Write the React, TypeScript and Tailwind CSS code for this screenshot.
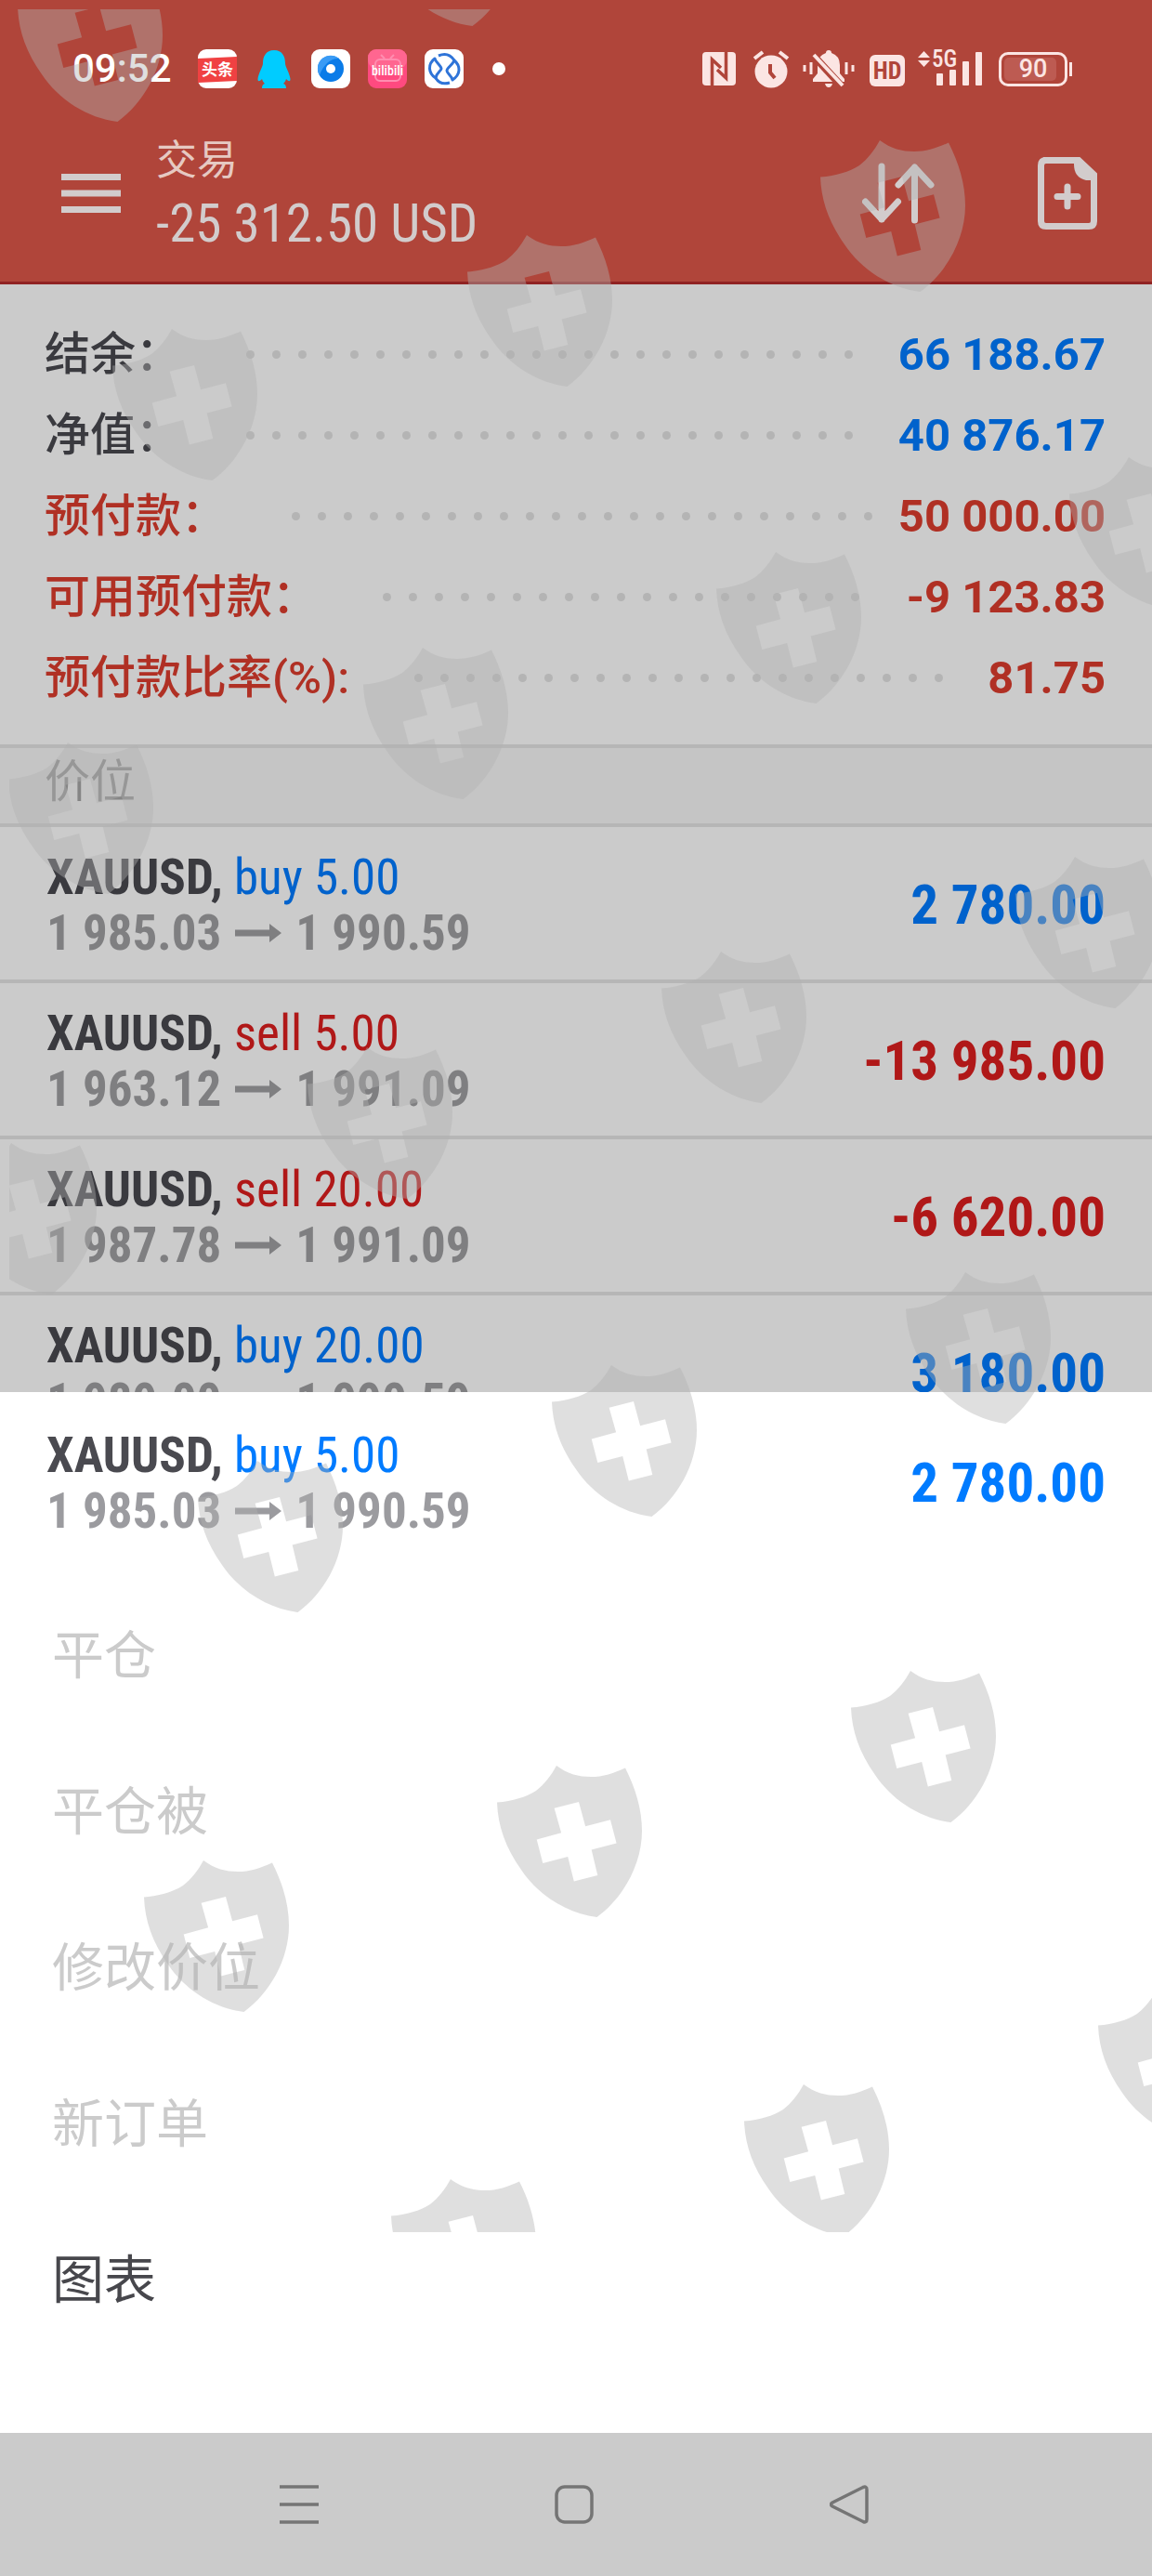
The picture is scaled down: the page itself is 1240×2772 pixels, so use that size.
import type { ReactNode } from "react";

type Side = "buy" | "sell";

type Position = {
  id: number;
  symbol: string;
  side: Side;
  volume: string;
  open: string;
  current: string;
  profit: string;
};

const positions: Position[] = [
  { id: 1, symbol: "XAUUSD", side: "buy", volume: "5.00", open: "1 985.03", current: "1 990.59", profit: "2 780.00" },
  { id: 2, symbol: "XAUUSD", side: "sell", volume: "5.00", open: "1 963.12", current: "1 991.09", profit: "-13 985.00" },
  { id: 3, symbol: "XAUUSD", side: "sell", volume: "20.00", open: "1 987.78", current: "1 991.09", profit: "-6 620.00" },
  { id: 4, symbol: "XAUUSD", side: "buy", volume: "20.00", open: "1 989.00", current: "1 990.59", profit: "3 180.00" },
];

const summary = [
  { label: "结余：", value: "66 188.67", labelColor: "text-[#3a3a3f]", valueColor: "text-[#0062cc]" },
  { label: "净值：", value: "40 876.17", labelColor: "text-[#3a3a3f]", valueColor: "text-[#0062cc]" },
  { label: "预付款：", value: "50 000.00", labelColor: "text-[#b03024]", valueColor: "text-[#b03024]" },
  { label: "可用预付款：", value: "-9 123.83", labelColor: "text-[#b03024]", valueColor: "text-[#b03024]" },
  { label: "预付款比率(%):", value: "81.75", labelColor: "text-[#b03024]", valueColor: "text-[#b03024]" },
];

const actions = [
  { label: "平仓", enabled: false },
  { label: "平仓被", enabled: false },
  { label: "修改价位", enabled: false },
  { label: "新订单", enabled: false },
  { label: "图表", enabled: true },
];

const shields = [
  [9, -42], [391, -145], [873, 141], [493, 243], [111, 344], [1141, 482],
  [761, 584], [381, 687], [-1, 789], [1083, 912], [702, 1014], [321, 1117],
  [-62, 1220], [965, 1359], [584, 1459], [203, 1562], [906, 1788], [525, 1890],
  [145, 1992], [1172, 2130], [791, 2233], [411, 2335],
];

function Shields() {
  return (
    <svg
      aria-hidden="true"
      className="pointer-events-none absolute top-[10px] right-0 left-[10px] h-[2392px] w-[calc(100%-10px)] fill-[#b2b2b2] opacity-[0.41]"
    >
      {shields.map(([x, y]) => (
        <path
          key={`${x}-${y}`}
          transform={`translate(${x} ${y})`}
          fillRule="evenodd"
          d="M64 0C76 9 88 12 101 12C114 12 126 8 138 2.4C149 24 156 47 156 70C156 107 135 143 107.500 163C75 159 44 139 26 112C9 88 1 65 0 39.600C17 38 31 34 42 27C51 20 58 11 64 0Z
            M61.600 45.700L69.100 72.200L42.700 79.600L49.300 104.900L76.200 97.900L82.800 124.400L108.300 117.900L101.700 90.600L128.600 83.600L122 58.300L95.100 65.300L88 39.100Z"
        />
      ))}
    </svg>
  );
}

function AppIcons() {
  return (
    <div className="flex items-center gap-[19px]">
      <svg width="42" height="42" viewBox="0 0 42 42" role="img" aria-label="头条">
        <rect width="42" height="42" rx="9" fill="#fff" />
        <path d="M0 10L42 8V34L0 36Z" fill="#f04142" />
        <text x="21" y="28" textAnchor="middle" fontSize="17" fontWeight="700" fill="#fff" className="font-['Noto_Sans_CJK_SC',sans-serif]">
          头条
        </text>
      </svg>
      <svg width="42" height="42" viewBox="0 0 42 42" role="img" aria-label="QQ">
        <path
          d="M21 1C12 1 9 8 9 15C9 19 4 26 3.500 32C3.500 35 5 35 8 32C9 35 10 36 11 37C8 38 8 41 8 42H34C34 41 34 38 31 37C32 36 33 35 34 32C37 35 38.500 35 38.500 32C38 26 33 19 33 15C33 8 30 1 21 1Z"
          fill="#0cf"
        />
      </svg>
      <svg width="42" height="42" viewBox="0 0 42 42" aria-hidden="true">
        <rect width="42" height="42" rx="9" fill="#fff" />
        <circle cx="21" cy="21" r="14" fill="#0a7be8" />
        <path d="M9 28A14 14 0 0 1 30 10C22 9 13 16 9 28Z" fill="#3a9bf5" />
        <circle cx="21" cy="21" r="5" fill="#fff" />
      </svg>
      <svg width="42" height="42" viewBox="0 0 42 42" role="img" aria-label="bilibili">
        <rect width="42" height="42" rx="9" fill="#ff4a80" />
        <rect width="42" height="21" rx="9" fill="#ff6690" />
        <rect x="8" y="11" width="27" height="23" rx="5" fill="none" stroke="#ff8db0" strokeWidth="2" />
        <path d="M14 6L18 10M28 6L24 10" stroke="#ff8db0" strokeWidth="2" />
        <text x="21" y="28" textAnchor="middle" fontSize="14" fontWeight="500" fill="#fff" className="font-[Roboto_Condensed,Roboto,sans-serif]">
          bilibili
        </text>
      </svg>
      <svg width="42" height="42" viewBox="0 0 42 42" aria-hidden="true">
        <rect width="42" height="42" rx="9" fill="#fff" />
        <g fill="none" stroke="#2f74d8" strokeWidth="3" strokeLinejoin="round">
          <path d="M12 31C4 26 3 16 11 10C12 14 18 18 18 21C18 23 13 25 12 31Z" />
          <path d="M30 33C39 27 39 18 32 12C30 17 24 20 24 23C24 26 29 28 30 33Z" />
          <path d="M15 7C22 4 28 6 32 12M27 36C20 38 15 36 12 31" />
        </g>
      </svg>
      <span className="ml-[12px] size-[14px] rounded-full bg-white" />
    </div>
  );
}

function SystemIcons() {
  return (
    <div className="flex items-center text-[#fbe5e3]">
      <svg width="36" height="36" viewBox="0 0 36 36" aria-label="NFC" role="img">
        <rect width="36" height="36" rx="4" fill="currentColor" />
        <path d="M10.500 36V8L20 17M25.500 0V28L16 19" fill="none" stroke="#b0453a" strokeWidth="3.500" />
      </svg>
      <svg className="ml-[18px]" width="40" height="42" viewBox="0 0 40 42" aria-label="闹钟" role="img">
        <circle cx="20" cy="24" r="17.500" fill="currentColor" />
        <path d="M2 10L11 3M38 10L29 3" stroke="currentColor" strokeWidth="4" />
        <path d="M19 16V25L24 31" fill="none" stroke="#b0453a" strokeWidth="4" />
      </svg>
      <svg className="ml-[14px]" width="56" height="42" viewBox="0 0 56 42" aria-label="静音" role="img">
        <path d="M28 1Q31 1 31 4Q40 7 40 17V26L45 32V35H11V32L16 26V17Q16 7 25 4Q25 1 28 1ZM24 37H32Q31 41 28 41Q25 41 24 37Z" fill="currentColor" />
        <path d="M9 4L43 41" stroke="#b0453a" strokeWidth="8" />
        <path d="M12 6L43 39" stroke="currentColor" strokeWidth="4" />
        <path d="M2 17V24M9 14V27M47 14V27M54 17V24" stroke="currentColor" strokeWidth="3" />
      </svg>
      <span className="mt-[4px] ml-[16px] flex h-[34px] w-[38px] items-center justify-center rounded-[6px] bg-[#fbe5e3]">
        <span className="font-[Roboto_Condensed,Roboto,sans-serif] text-[26px] leading-[26px] font-bold text-[#b0453a]">HD</span>
      </span>
      <svg className="ml-[14px] overflow-visible" width="70" height="42" viewBox="0 0 70 42" fill="currentColor" aria-label="5G" role="img">
        <path d="M0 9L6.500 2L13 9ZM0 12L6.500 19L13 12Z" />
        <text x="15" y="19" fontSize="25" fontWeight="500" className="font-[Roboto_Condensed,Roboto,sans-serif]">
          5G
        </text>
        <rect x="20" y="26" width="7" height="13" rx="1" />
        <rect x="34" y="22" width="7" height="17" rx="1" />
        <rect x="48" y="13" width="7" height="26" rx="1" />
        <rect x="62" y="3" width="7" height="36" rx="1" />
      </svg>
      <span className="ml-[17px] flex h-[37px] w-[74px] rounded-[10px] border-[3px] border-current py-[3px] pr-[9px] pl-[3px]">
        <span className="flex flex-1 items-center justify-center rounded-[5px] bg-[#bd5b52] pl-[6px] font-[Roboto,sans-serif] text-[27px] leading-[26px] font-medium">
          90
        </span>
      </span>
      <span className="ml-[2px] h-[15px] w-[3px] bg-current" />
    </div>
  );
}

function MenuIcon() {
  return (
    <svg width="64" height="42" viewBox="0 0 64 42" fill="currentColor" aria-hidden="true">
      <path d="M0 0H64V7H0ZM0 17.500H64V24.500H0ZM0 35H64V42H0Z" />
    </svg>
  );
}

function SortIcon() {
  return (
    <svg width="78" height="66" viewBox="0 0 78 66" fill="none" stroke="currentColor" strokeWidth="7" strokeLinecap="round" strokeLinejoin="round" aria-hidden="true">
      <path d="M21 4V61M3.500 42L21 61L38.500 42" />
      <path d="M56.500 62V5M39 24L56.500 5L74 24" />
    </svg>
  );
}

function NewOrderIcon() {
  return (
    <svg width="64" height="78" viewBox="0 0 64 78" aria-hidden="true">
      <path d="M6 3.500H44L60.500 19V69Q60.500 74.500 55 74.500H9Q3.500 74.500 3.500 69V9Q3.500 3.500 9 3.500Z" fill="none" stroke="currentColor" strokeWidth="7" />
      <path d="M39 3H46L62 18V25H52Q39 22 39 8Z" fill="currentColor" />
      <path d="M32 32V53M21 42.500H43" stroke="currentColor" strokeWidth="7" strokeLinecap="round" />
    </svg>
  );
}

function PositionRow({ position, dimmed }: { position: Position; dimmed?: boolean }) {
  const loss = position.profit.startsWith("-");
  const blue = dimmed ? "text-[#0062cc]" : "text-[#007bff]";
  const red = dimmed ? "text-[#b01818]" : "text-[#dc1e1e]";
  return (
    <div className="flex items-center justify-between px-[50px] font-[Roboto_Condensed,Roboto,sans-serif]">
      <div className="text-[53px] leading-[60px] whitespace-nowrap">
        <p>
          <span className={dimmed ? "font-bold text-[#3a3a3f]" : "font-bold text-[#4a4a50]"}>{position.symbol},</span>{" "}
          <span className={position.side === "buy" ? blue : red}>
            {position.side} {position.volume}
          </span>
        </p>
        <p className={`flex items-center gap-[15px] font-bold ${dimmed ? "text-[#7f7f81]" : "text-[#9b9b9f]"}`}>
          {position.open}
          <svg width="50" height="20" viewBox="0 0 50 20" fill="currentColor" aria-hidden="true">
            <path d="M0 6.500H37V0L50 10L37 20V13.500H0Z" />
          </svg>
          {position.current}
        </p>
      </div>
      <span className={`text-[59px] leading-[64px] font-bold whitespace-nowrap ${loss ? red : blue}`}>{position.profit}</span>
    </div>
  );
}

function NavButton({ label, children }: { label: string; children: ReactNode }) {
  return (
    <button type="button" aria-label={label} className="p-[20px]">
      <svg width="42" height="42" viewBox="0 0 42 42" fill="none" stroke="currentColor" strokeWidth="3.500" aria-hidden="true">
        {children}
      </svg>
    </button>
  );
}

export default function App() {
  return (
    <div className="relative flex h-screen flex-col overflow-hidden bg-[#cbcbcb] font-[Roboto,'Noto_Sans_CJK_SC',sans-serif]">
      <header className="shrink-0 border-b-[3px] border-[#902323] bg-[#b0453a]">
        <div className="flex h-[112px] items-center justify-between pt-[36px] pr-[86px] pl-[78px]">
          <div className="flex items-center gap-[28px]">
            <time className="text-[42px] leading-[42px] font-medium text-white">09:52</time>
            <AppIcons />
          </div>
          <SystemIcons />
        </div>
        <div className="flex h-[191px] items-center pr-[59px] pl-[66px] text-[#d2cccc]">
          <button type="button" aria-label="菜单">
            <MenuIcon />
          </button>
          <div className="flex-1 pb-[2px] pl-[38px]">
            <h1 className="text-[44px] leading-[68px] text-[#e6c9c2]">交易</h1>
            <p className="font-[Roboto_Condensed,Roboto,sans-serif] text-[57px] leading-[68px]">-25 312.50 USD</p>
          </div>
          <button type="button" aria-label="排序" className="mr-[111px]">
            <SortIcon />
          </button>
          <button type="button" aria-label="新订单">
            <NewOrderIcon />
          </button>
        </div>
      </header>

      <main className="min-h-0 flex-1 overflow-hidden">
        <dl className="pt-[32px] pr-[50px] pb-[28px] pl-[48px] text-[49px] leading-[87px] font-medium">
          {summary.map((row) => (
            <div key={row.label} className="flex items-center">
              <dt className={row.labelColor}>{row.label}</dt>
              {/* dot leader: whole dots only, the rest wraps out of sight */}
              <span aria-hidden="true" className="mr-[26px] ml-[70px] flex h-[9px] flex-1 flex-wrap gap-[19px] overflow-hidden">
                {[...Array(32)].map((_, i) => (
                  <span key={i} className="size-[9px] rounded-full bg-[#b4b4b4]" />
                ))}
              </span>
              <dd className={`font-bold ${row.valueColor}`}>{row.value}</dd>
            </div>
          ))}
        </dl>
        <h2 className="border-y-[4px] border-[#b6b6b6] bg-[#c5c5c5] pb-[8px] pl-[48px] text-[49px] leading-[73px] text-[#858585]">价位</h2>
        <ul>
          {positions.map((p) => (
            <li key={p.id} className="border-b-[4px] border-[#b6b6b6] pt-[24px] pb-[20px]">
              <PositionRow position={p} dimmed />
            </li>
          ))}
        </ul>
      </main>

      <section aria-label="持仓操作" className="shrink-0 bg-white pt-[38px] pb-[80px]">
        <PositionRow position={positions[0]} />
        <div className="flex flex-col pt-[42px]">
          {actions.map((a) => (
            <button
              key={a.label}
              type="button"
              disabled={!a.enabled}
              className="px-[56px] text-left text-[56px] leading-[168px] text-[#47474c] disabled:text-[#cbcbcb]"
            >
              {a.label}
            </button>
          ))}
        </div>
      </section>

      <nav className="flex h-[154px] shrink-0 items-center justify-center gap-[214px] pr-[4px] text-[#757575]">
        <NavButton label="最近任务">
          <path d="M0 2H42M0 21H42M0 40H42" />
        </NavButton>
        <NavButton label="主屏幕">
          <rect x="2" y="2" width="38" height="38" rx="9" />
        </NavButton>
        <NavButton label="返回">
          <path d="M36 2.500L3 19Q0 21 3 23L36 39.500Q40 41 40 37V5Q40 1 36 2.500Z" />
        </NavButton>
      </nav>

      <Shields />
    </div>
  );
}
